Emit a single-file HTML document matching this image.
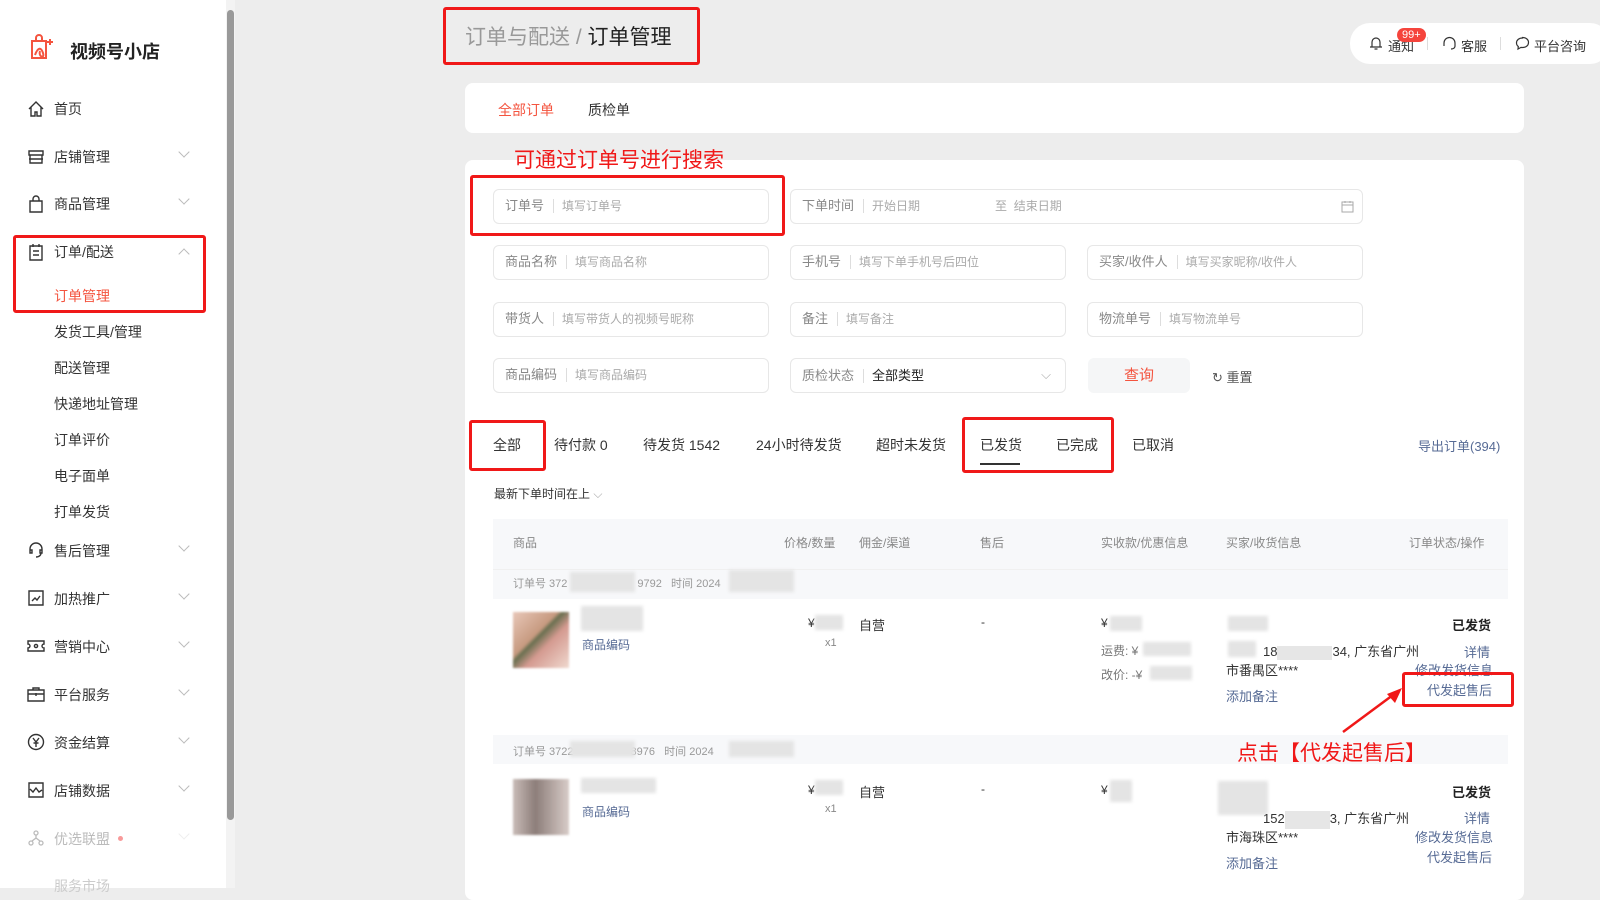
<!DOCTYPE html>
<html><head><meta charset="utf-8"><style>
*{box-sizing:border-box;margin:0;padding:0}
body{width:1600px;height:888px;overflow:hidden;background:#ededed;font-family:"Liberation Sans","Noto Sans CJK SC",sans-serif;color:#333;position:relative;font-size:13px}
.a{position:absolute;white-space:nowrap}
.side{position:absolute;left:0;top:0;width:226px;height:888px;background:#fff}
.sb{position:absolute;left:226px;top:0;width:9px;height:888px;background:#f3f3f3}
.sb div{position:absolute;left:1px;top:10px;width:7px;height:810px;background:#999;border-radius:4px}
.mi{position:absolute;left:54px;font-size:14px;color:#333}
.ic{position:absolute;left:27px;width:18px;height:18px}
.chev{position:absolute;left:180px;width:8px;height:8px;border-right:1.3px solid #bbb;border-bottom:1.3px solid #bbb;transform:rotate(45deg)}
.sub{position:absolute;left:54px;font-size:14px;color:#333}
.red{border:3px solid #f01818;position:absolute;border-radius:3px}
.card{position:absolute;background:#fff;border-radius:8px}
.inp{position:absolute;height:35px;border:1px solid #e7e7e7;border-radius:6px;font-size:12px;color:#aaa;line-height:33px;padding-left:11px}
.inp b{font-weight:normal;color:#888;font-size:13px;margin-right:8px;padding-right:9px;border-right:1px solid #ddd;line-height:14px;display:inline-block}
.tab{position:absolute;top:435px;font-size:14px;color:#333}
.th{position:absolute;top:534px;font-size:12px;color:#888}
.lk{color:#576b95;font-size:12px}
.blur{position:absolute;background:#e4e4e4;filter:blur(1.5px)}
</style></head><body>
<div class="side"></div>
<div class="sb"><div></div></div>
<!-- logo -->
<svg class="a" style="left:28px;top:33px" width="30" height="30" viewBox="0 0 30 30" fill="none" stroke="#f4543f" stroke-width="2"><path d="M4 8h14v17H4z"/><path d="M8 8V5a3 3 0 016 0v3"/><path d="M7 22c3-8 6-8 8-2s-5 4-3-2"/><path d="M22 6v6M19 9h6"/></svg>
<div class="a" style="left:70px;top:38px;font-size:18px;font-weight:bold;color:#222">视频号小店</div>
<!-- menu -->
<svg class="ic" style="top:100px" viewBox="0 0 18 18" fill="none" stroke="#333" stroke-width="1.4"><path d="M2 9L9 2l7 7M4 7v9h4v-4h2v4h4V7"/></svg><div class="mi" style="top:99px">首页</div>
<svg class="ic" style="top:148px" viewBox="0 0 18 18" fill="none" stroke="#333" stroke-width="1.4"><path d="M2 3h14v4H2zM3 7v8h12V7M2 11h14"/></svg><div class="mi" style="top:147px">店铺管理</div><div class="chev" style="top:148px"></div>
<svg class="ic" style="top:195px" viewBox="0 0 18 18" fill="none" stroke="#333" stroke-width="1.4"><path d="M3 6h12v11H3zM6 6V4a3 3 0 016 0v2"/></svg><div class="mi" style="top:194px">商品管理</div><div class="chev" style="top:195px"></div>
<svg class="ic" style="top:243px" viewBox="0 0 18 18" fill="none" stroke="#333" stroke-width="1.4"><path d="M3 3h12v14H3zM6 1v3M12 1v3M6 8h6M6 12h6"/></svg><div class="mi" style="top:242px">订单/配送</div><div class="chev" style="top:250px;transform:rotate(225deg)"></div>
<div class="sub" style="top:286px;color:#f4543f">订单管理</div>
<div class="sub" style="top:322px">发货工具/管理</div>
<div class="sub" style="top:358px">配送管理</div>
<div class="sub" style="top:394px">快递地址管理</div>
<div class="sub" style="top:430px">订单评价</div>
<div class="sub" style="top:466px">电子面单</div>
<div class="sub" style="top:502px">打单发货</div>
<svg class="ic" style="top:541px" viewBox="0 0 18 18" fill="none" stroke="#333" stroke-width="1.4"><path d="M3 11V8a6 6 0 0112 0v3M3 9v3h2V9zM13 9v3h2V9zM14 12c0 3-3 4-5 4"/></svg><div class="mi" style="top:541px">售后管理</div><div class="chev" style="top:542px"></div>
<svg class="ic" style="top:589px" viewBox="0 0 18 18" fill="none" stroke="#333" stroke-width="1.4"><path d="M2 2h14v14H2zM5 12l3-3 2 2 3-4"/></svg><div class="mi" style="top:589px">加热推广</div><div class="chev" style="top:590px"></div>
<svg class="ic" style="top:637px" viewBox="0 0 18 18" fill="none" stroke="#333" stroke-width="1.4"><path d="M1 4h16v3a2 2 0 000 4v3H1v-3a2 2 0 000-4z"/><circle cx="9" cy="9" r="1.6"/></svg><div class="mi" style="top:637px">营销中心</div><div class="chev" style="top:638px"></div>
<svg class="ic" style="top:685px" viewBox="0 0 18 18" fill="none" stroke="#333" stroke-width="1.4"><path d="M1 5h16v11H1zM6 5V3h6v2M1 9h16M9 8v3"/></svg><div class="mi" style="top:685px">平台服务</div><div class="chev" style="top:686px"></div>
<svg class="ic" style="top:733px" viewBox="0 0 18 18" fill="none" stroke="#333" stroke-width="1.4"><circle cx="9" cy="9" r="7.5"/><path d="M6 5l3 4 3-4M9 9v5M6.5 10h5"/></svg><div class="mi" style="top:733px">资金结算</div><div class="chev" style="top:734px"></div>
<svg class="ic" style="top:781px" viewBox="0 0 18 18" fill="none" stroke="#333" stroke-width="1.4"><path d="M2 2h14v14H2zM3 8l3 3 3-4 3 4 3-2"/></svg><div class="mi" style="top:781px">店铺数据</div><div class="chev" style="top:782px"></div>
<svg class="ic" style="top:829px" viewBox="0 0 18 18" fill="none" stroke="#bbb" stroke-width="1.3"><circle cx="9" cy="4" r="2"/><circle cx="4" cy="14" r="2"/><circle cx="14" cy="14" r="2"/><path d="M9 6v3l-4 3M9 9l4 3"/></svg><div class="mi" style="top:829px;color:#bbb">优选联盟</div><div class="a" style="left:118px;top:836px;width:5px;height:5px;border-radius:50%;background:#f89a9a"></div><div class="chev" style="top:830px;border-color:#eee"></div>
<div class="mi" style="top:876px;color:#ccc">服务市场</div>
<div class="red" style="left:13px;top:235px;width:193px;height:78px"></div>

<!-- breadcrumb -->
<div class="a" style="left:465px;top:21px;font-size:21px;color:#999">订单与配送 / <span style="color:#222">订单管理</span></div>
<div class="red" style="left:443px;top:7px;width:257px;height:58px"></div>
<!-- header pill -->
<div class="card" style="left:1350px;top:23px;width:260px;height:41px;border-radius:20px"></div>
<svg class="a" style="left:1369px;top:36px" width="14" height="15" viewBox="0 0 14 15" fill="none" stroke="#333" stroke-width="1.2"><path d="M3 11V6a4 4 0 018 0v5h2H1zM5.5 13h3"/></svg>
<div class="a" style="left:1388px;top:36px;font-size:13px">通知</div>
<div class="a" style="left:1397px;top:28px;background:#f5443c;color:#fff;font-size:11px;border-radius:8px;padding:0 5px;line-height:14px">99+</div>
<div class="a" style="left:1427px;top:37px;width:1px;height:13px;background:#ddd"></div>
<svg class="a" style="left:1442px;top:36px" width="15" height="15" viewBox="0 0 15 15" fill="none" stroke="#333" stroke-width="1.2"><path d="M2 9V7a5.5 5.5 0 0111 0v2M2 8v2M13 8v2c0 2-2 3-4 3"/></svg>
<div class="a" style="left:1461px;top:36px;font-size:13px">客服</div>
<div class="a" style="left:1500px;top:37px;width:1px;height:13px;background:#ddd"></div>
<svg class="a" style="left:1515px;top:36px" width="15" height="15" viewBox="0 0 15 15" fill="none" stroke="#333" stroke-width="1.2"><path d="M7.5 2C4 2 1.5 4 1.5 7c0 1.5.7 2.7 1.8 3.5L3 13l3-1.6c.5.1 1 .1 1.5.1 3.5 0 6-2 6-5s-2.5-5-6-5z"/></svg>
<div class="a" style="left:1534px;top:36px;font-size:13px">平台咨询</div>

<!-- tab card -->
<div class="card" style="left:465px;top:83px;width:1059px;height:50px"></div>
<div class="a" style="left:498px;top:100px;font-size:14px;color:#f4543f">全部订单</div>
<div class="a" style="left:588px;top:100px;font-size:14px;color:#333">质检单</div>

<!-- main card -->
<div class="card" style="left:465px;top:160px;width:1059px;height:740px"></div>
<div class="a" style="left:514px;top:144px;font-size:21px;color:#f01818">可通过订单号进行搜索</div>
<div class="inp" style="left:493px;top:189px;width:276px"><b>订单号</b>填写订单号</div>
<div class="red" style="left:470px;top:175px;width:315px;height:61px"></div>
<div class="inp" style="left:790px;top:189px;width:573px"><b>下单时间</b>开始日期<span style="margin-left:75px">至&nbsp; 结束日期</span>
<svg style="position:absolute;right:8px;top:10px" width="13" height="13" viewBox="0 0 13 13" fill="none" stroke="#aaa"><path d="M1 2h11v10H1zM1 5h11M4 1v2M9 1v2"/></svg></div>
<div class="inp" style="left:493px;top:245px;width:276px"><b>商品名称</b>填写商品名称</div>
<div class="inp" style="left:790px;top:245px;width:276px"><b>手机号</b>填写下单手机号后四位</div>
<div class="inp" style="left:1087px;top:245px;width:276px"><b>买家/收件人</b>填写买家昵称/收件人</div>
<div class="inp" style="left:493px;top:302px;width:276px"><b>带货人</b>填写带货人的视频号昵称</div>
<div class="inp" style="left:790px;top:302px;width:276px"><b>备注</b>填写备注</div>
<div class="inp" style="left:1087px;top:302px;width:276px"><b>物流单号</b>填写物流单号</div>
<div class="inp" style="left:493px;top:358px;width:276px"><b>商品编码</b>填写商品编码</div>
<div class="inp" style="left:790px;top:358px;width:276px;color:#222;font-size:13px"><b>质检状态</b>全部类型<span style="position:absolute;right:14px;top:-1px;color:#aaa">⌵</span></div>
<div class="a" style="left:1088px;top:358px;width:102px;height:35px;background:#f5f6f7;border-radius:6px;color:#f4543f;font-size:15px;text-align:center;line-height:35px">查询</div>
<div class="a" style="left:1212px;top:367px;font-size:13px;color:#555">↻ 重置</div>

<!-- status tabs -->
<div class="tab" style="left:493px">全部</div>
<div class="tab" style="left:554px">待付款 0</div>
<div class="tab" style="left:643px">待发货 1542</div>
<div class="tab" style="left:756px">24小时待发货</div>
<div class="tab" style="left:876px">超时未发货</div>
<div class="tab" style="left:980px">已发货</div>
<div class="tab" style="left:1056px">已完成</div>
<div class="tab" style="left:1132px">已取消</div>
<div class="a" style="left:980px;top:463px;width:40px;height:2px;background:#333"></div>
<div class="a" style="left:1418px;top:436px;font-size:13px;color:#576b95">导出订单(394)</div>
<div class="red" style="left:469px;top:420px;width:77px;height:51px"></div>
<div class="red" style="left:962px;top:417px;width:152px;height:56px"></div>
<div class="a" style="left:494px;top:485px;font-size:12px;color:#333">最新下单时间在上 <span style="color:#aaa">⌵</span></div>

<!-- table -->
<div class="a" style="left:493px;top:519px;width:1015px;height:80px;background:#f7f8fa"></div>
<div class="a" style="left:493px;top:569px;width:1015px;height:1px;background:#f0f0f0"></div>
<div class="th" style="left:513px">商品</div><div class="th" style="left:784px">价格/数量</div><div class="th" style="left:859px">佣金/渠道</div><div class="th" style="left:980px">售后</div><div class="th" style="left:1101px">实收款/优惠信息</div><div class="th" style="left:1226px">买家/收货信息</div><div class="th" style="left:1409px">订单状态/操作</div>
<div class="a" style="left:513px;top:575px;font-size:11px;color:#999">订单号 372<span style="display:inline-block;width:70px"></span>9792 &nbsp; 时间 2024</div>
<div class="blur" style="left:570px;top:572px;width:65px;height:20px"></div><div class="blur" style="left:729px;top:570px;width:65px;height:22px"></div>
<!-- row1 -->
<div class="a" style="left:513px;top:612px;width:56px;height:56px;background:linear-gradient(135deg,#e8c7b8,#c79a80 40%,#6a7050 45%,#d49a90 60%,#f0d9cf);filter:blur(1px)"></div>
<div class="blur" style="left:581px;top:606px;width:62px;height:25px"></div>
<div class="a lk" style="left:582px;top:636px">商品编码</div>
<div class="a" style="left:808px;top:616px;font-size:12px">¥</div><div class="blur" style="left:815px;top:615px;width:28px;height:15px"></div>
<div class="a" style="left:825px;top:637px;font-size:11px;color:#888">x1</div>
<div class="a" style="left:859px;top:615px;font-size:13px">自营</div>
<div class="a" style="left:981px;top:615px;font-size:12px">-</div>
<div class="a" style="left:1101px;top:616px;font-size:12px">¥</div><div class="blur" style="left:1110px;top:616px;width:32px;height:15px"></div>
<div class="a" style="left:1101px;top:642px;font-size:12px;color:#777">运费: ¥</div><div class="blur" style="left:1143px;top:642px;width:48px;height:14px"></div>
<div class="a" style="left:1101px;top:666px;font-size:12px;color:#777">改价: -¥</div><div class="blur" style="left:1150px;top:666px;width:42px;height:14px"></div>
<div class="blur" style="left:1228px;top:616px;width:40px;height:15px"></div>
<div class="blur" style="left:1228px;top:641px;width:28px;height:16px"></div>
<div class="a" style="left:1263px;top:641px;font-size:13px;color:#333">18<span style="display:inline-block;width:55px;background:#e6e6e6;height:14px;vertical-align:middle"></span>34, 广东省广州</div>
<div class="a" style="left:1226px;top:660px;font-size:13px">市番禺区****</div>
<div class="a lk" style="left:1226px;top:686px;font-size:13px">添加备注</div>
<div class="a" style="left:1452px;top:615px;font-size:13px;font-weight:bold;color:#222">已发货</div>
<div class="a lk" style="left:1464px;top:642px;font-size:13px">详情</div>
<div class="a lk" style="left:1415px;top:660px;font-size:13px">修改发货信息</div>
<div class="a lk" style="left:1427px;top:680px;font-size:13px">代发起售后</div>
<div class="red" style="left:1402px;top:672px;width:112px;height:35px"></div>
<!-- row2 -->
<div class="a" style="left:493px;top:735px;width:1015px;height:29px;background:#f7f8fa"></div>
<div class="a" style="left:513px;top:743px;font-size:11px;color:#999">订单号 3722<span style="display:inline-block;width:57px"></span>8976 &nbsp; 时间 2024</div>
<div class="blur" style="left:570px;top:741px;width:65px;height:16px"></div><div class="blur" style="left:729px;top:741px;width:65px;height:16px"></div>
<svg class="a" style="left:1340px;top:685px" width="65" height="50" viewBox="0 0 65 50"><path d="M3 47L57 7" stroke="#f01818" stroke-width="2.5"/><path d="M62 3L47 9l8 9z" fill="#f01818"/></svg>
<div class="a" style="left:1237px;top:737px;font-size:21px;color:#f01818">点击【代发起售后】</div>
<div class="a" style="left:513px;top:779px;width:56px;height:56px;background:linear-gradient(90deg,#c9bcb8,#8d7e7a 40%,#d8ccc8);filter:blur(1px)"></div>
<div class="blur" style="left:581px;top:778px;width:75px;height:15px"></div>
<div class="a lk" style="left:582px;top:803px">商品编码</div>
<div class="a" style="left:808px;top:783px;font-size:12px">¥</div><div class="blur" style="left:815px;top:780px;width:28px;height:15px"></div>
<div class="a" style="left:825px;top:803px;font-size:11px;color:#888">x1</div>
<div class="a" style="left:859px;top:782px;font-size:13px">自营</div>
<div class="a" style="left:981px;top:782px;font-size:12px">-</div>
<div class="a" style="left:1101px;top:783px;font-size:12px">¥</div><div class="blur" style="left:1110px;top:780px;width:22px;height:22px"></div>
<div class="blur" style="left:1218px;top:781px;width:50px;height:34px"></div>
<div class="a" style="left:1263px;top:808px;font-size:13px;color:#333">152<span style="display:inline-block;width:45px;background:#e6e6e6;height:18px;vertical-align:middle"></span>3, 广东省广州</div>
<div class="a" style="left:1226px;top:827px;font-size:13px">市海珠区****</div>
<div class="a lk" style="left:1226px;top:853px;font-size:13px">添加备注</div>
<div class="a" style="left:1452px;top:782px;font-size:13px;font-weight:bold;color:#222">已发货</div>
<div class="a lk" style="left:1464px;top:808px;font-size:13px">详情</div>
<div class="a lk" style="left:1415px;top:827px;font-size:13px">修改发货信息</div>
<div class="a lk" style="left:1427px;top:847px;font-size:13px">代发起售后</div>
</body></html>
